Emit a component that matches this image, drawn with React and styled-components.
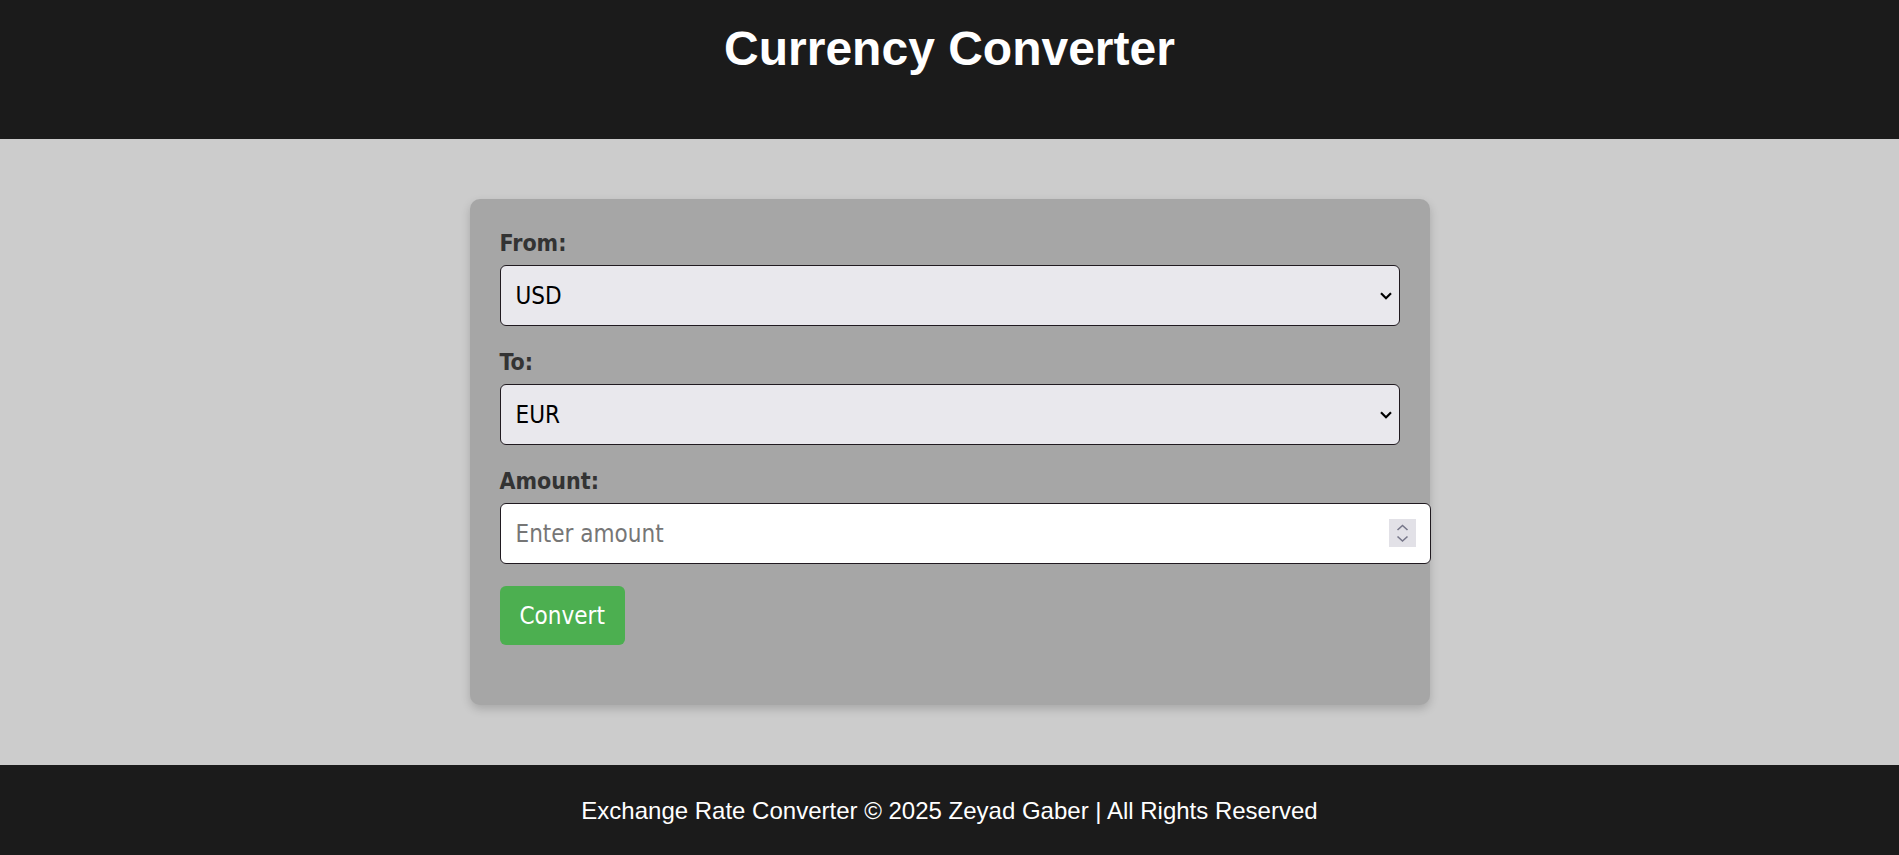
import { useState } from 'react'
import styled, { createGlobalStyle } from 'styled-components'

const currencies = ['USD', 'EUR', 'GBP', 'EGP', 'JPY']

const GlobalStyle = createGlobalStyle`
  html, body {
    margin: 0;
    padding: 0;
  }

  body {
    background: #cccccc;
    font-family: "Liberation Sans", Arial, sans-serif;
  }

  input[type=number]::-webkit-inner-spin-button,
  input[type=number]::-webkit-outer-spin-button {
    -webkit-appearance: none;
    margin: 0;
  }
`

export default function App() {
  const [ from, setFrom ] = useState('USD')
  const [ to, setTo ] = useState('EUR')
  const [ amount, setAmount ] = useState('')

  return (
    <>
      <GlobalStyle />
      <Header>
        <Title>Currency Converter</Title>
      </Header>
      <Main>
        <Card onSubmit={e => e.preventDefault()}>
          <Field>
            <Label htmlFor="from">From:</Label>
            <SelectWrap>
              <Select id="from" value={from} onChange={e => setFrom(e.target.value)}>
                {currencies.map(c => <option key={c}>{c}</option>)}
              </Select>
              <Chevron width="12" height="8" viewBox="0 0 12 8">
                <polyline points="1,1.2 6,6.2 11,1.2" />
              </Chevron>
            </SelectWrap>
          </Field>
          <Field>
            <Label htmlFor="to">To:</Label>
            <SelectWrap>
              <Select id="to" value={to} onChange={e => setTo(e.target.value)}>
                {currencies.map(c => <option key={c}>{c}</option>)}
              </Select>
              <Chevron width="12" height="8" viewBox="0 0 12 8">
                <polyline points="1,1.2 6,6.2 11,1.2" />
              </Chevron>
            </SelectWrap>
          </Field>
          <Field>
            <Label htmlFor="amount">Amount:</Label>
            <InputWrap>
              <Input
                id="amount"
                type="number"
                placeholder="Enter amount"
                value={amount}
                onChange={e => setAmount(e.target.value)}
              />
              <Spinner width="27" height="28" viewBox="0 0 27 28">
                <polyline points="8.5,11 13.5,6.5 18.5,11" />
                <polyline points="8.5,17.5 13.5,22 18.5,17.5" />
              </Spinner>
            </InputWrap>
          </Field>
          <Button type="submit">Convert</Button>
        </Card>
      </Main>
      <Footer>Exchange Rate Converter © 2025 Zeyad Gaber | All Rights Reserved</Footer>
    </>
  )
}

const formFont = `"DejaVu Sans Condensed", "DejaVu Sans", Verdana, sans-serif`

const Header = styled.header`
  background: #1b1b1b;
  padding: 21px 20px 63px;
  text-align: center;
`

const Title = styled.h1`
  margin: 0;
  color: #ffffff;
  font-size: 48px;
  font-weight: 700;
  line-height: 55px;
`

const Main = styled.main`
  padding: 60px 0;
`

const Card = styled.form`
  box-sizing: border-box;
  width: 960px;
  margin: 0 auto;
  padding: 30px 30px 60px;
  background: #a6a6a6;
  border-radius: 10px;
  box-shadow: 0 4px 10px rgba(0, 0, 0, 0.18);
  font-family: ${formFont};
`

const Field = styled.div`
  margin-bottom: 22px;
`

const Label = styled.label`
  display: block;
  margin-bottom: 8px;
  color: #333333;
  font-size: 23px;
  font-weight: 700;
  line-height: 28px;
`

const SelectWrap = styled.div`
  position: relative;
`

const Select = styled.select`
  appearance: none;
  -webkit-appearance: none;
  box-sizing: border-box;
  display: block;
  width: 100%;
  height: 61px;
  margin: 0;
  padding: 0 15px;
  background: #e9e8ed;
  border: 1px solid #201a20;
  border-radius: 6px;
  color: #000000;
  font-family: ${formFont};
  font-size: 24px;
  outline: none;
`

const Chevron = styled.svg`
  position: absolute;
  right: 8px;
  top: 50%;
  transform: translateY(-50%);
  pointer-events: none;
  fill: none;
  stroke: #000000;
  stroke-width: 2.2;
`

const InputWrap = styled.div`
  position: relative;
  width: calc(100% + 31px);
`

const Input = styled.input`
  box-sizing: border-box;
  display: block;
  width: 100%;
  height: 61px;
  margin: 0;
  padding: 0 15px;
  background: #ffffff;
  border: 1px solid #201a20;
  border-radius: 6px;
  color: #000000;
  font-family: ${formFont};
  font-size: 24px;
  outline: none;

  &::placeholder {
    color: #767676;
  }
`

const Spinner = styled.svg`
  position: absolute;
  right: 15px;
  top: 16px;
  background: #e2e1e7;
  pointer-events: none;
  fill: none;
  stroke: #77778a;
  stroke-width: 1.6;
`

const Button = styled.button`
  display: block;
  margin: 0;
  padding: 16px 20px 14px;
  background: #4caf50;
  border: none;
  border-radius: 6px;
  color: #ffffff;
  font-family: ${formFont};
  font-size: 24px;
  line-height: 29px;
  cursor: pointer;
`

const Footer = styled.footer`
  background: #1b1b1b;
  padding: 32px 20px 30px;
  color: #ffffff;
  font-size: 24px;
  line-height: 28px;
  text-align: center;
`
